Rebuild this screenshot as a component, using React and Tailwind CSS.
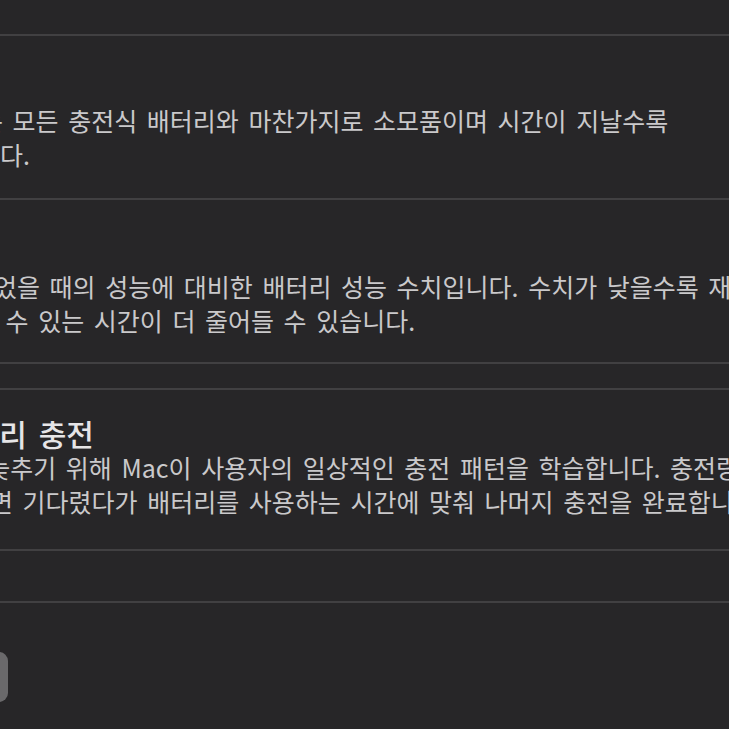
export default function App() {
  const font = { fontFamily: '"Noto Sans CJK KR", "Noto Sans", sans-serif' };
  const Divider = () => <div className="h-[2px] w-full bg-[#414042]" />;
  const Line = ({ ml, children }) => (
    <div className={`whitespace-nowrap ${ml}`}>{children}</div>
  );
  return (
    <div
      className="w-[729px] h-[729px] overflow-hidden bg-[#272628] text-[#cac9cb] flex flex-col"
      style={font}
    >
      <div className="h-[34px] shrink-0" />
      <Divider />

      {/* Section 1 */}
      <div className="h-[162px] shrink-0 pt-[67px] text-[25px] leading-[34px] [word-spacing:4px]">
        <Line ml="ml-[-89px]">배터리는 모든 충전식 배터리와 마찬가지로 소모품이며 시간이 지날수록</Line>
        <Line ml="ml-[-92px]">저하됩니다.</Line>
      </div>
      <Divider />

      {/* Section 2 */}
      <div className="h-[162px] shrink-0 pt-[69px] text-[25px] leading-[34px] [word-spacing:4px]">
        <Line ml="ml-[-75px]">새것이었을 때의 성능에 대비한 배터리 성능 수치입니다. 수치가 낮을수록 재충전 전에</Line>
        <Line ml="ml-[-73px]">사용할 수 있는 시간이 더 줄어들 수 있습니다.</Line>
      </div>
      <Divider />
      <div className="h-[24px] shrink-0" />
      <Divider />

      {/* Section 3 */}
      <div className="h-[159px] shrink-0 pt-[26px]">
        <div className="whitespace-nowrap ml-[-178px] text-[30px] leading-[34px] font-medium text-[#e6e5e7] [word-spacing:5px]">
          최적화된 배터리 충전
        </div>
        <div className="text-[25px] leading-[34px] [word-spacing:4px]">
          <Line ml="ml-[-170px]">배터리 노화를 늦추기 위해 Mac이 사용자의 일상적인 충전 패턴을 학습합니다. 충전량이 80%에</Line>
          <Line ml="ml-[-79px]">도달하면 기다렸다가 배터리를 사용하는 시간에 맞춰 나머지 충전을 완료합니다.</Line>
        </div>
      </div>
      <Divider />
      <div className="h-[50px] shrink-0" />
      <Divider />

      <div className="mt-[49px] h-[50px] w-[60px] ml-[-52px] rounded-[9px] bg-[#6a696b] shrink-0" />
    </div>
  );
}
